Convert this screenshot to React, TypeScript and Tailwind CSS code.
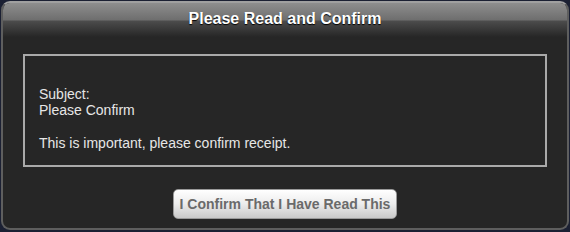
import React from "react";

export default function App() {
  return (
    <div className="w-[570px] h-[232px] bg-[#1b2033] p-[1px] pb-[2px]" style={{ fontFamily: '"Liberation Sans", Arial, sans-serif' }}>
      <div className="h-full rounded-[9px] border-2 border-[#5e5e5e] border-t-[#a0a0a0] bg-[#262626] overflow-hidden flex flex-col">
        <div className="h-[34px] shrink-0 bg-[linear-gradient(to_bottom,#8e8e8e_0%,#6e6e6e_50%,#4c4c4c_53%,#262626_100%)] flex justify-center pt-[6px]">
          <span className="text-white font-bold text-[16px] leading-[20px] [text-shadow:0_1px_1px_#000]">Please Read and Confirm</span>
        </div>
        <div className="flex-1 flex flex-col px-[20px] pt-[17px]">
          <div className="h-[113px] border-2 border-[#a9a9a9] px-[14px] pt-[30px] text-[#e6e6e6] text-[14px] leading-[16px]">
            <div>Subject:</div>
            <div>Please Confirm</div>
            <div className="h-[17px]" />
            <div>This is important, please confirm receipt.</div>
          </div>
          <div className="flex justify-center pt-[22px]">
            <button className="w-[224px] h-[30px] rounded-[5px] border border-[#9a9a9a] bg-[linear-gradient(to_bottom,#ffffff_0%,#ececec_50%,#c9c9c9_100%)] text-[#6a6a6a] font-bold text-[14px]">
              I Confirm That I Have Read This
            </button>
          </div>
        </div>
      </div>
    </div>
  );
}
